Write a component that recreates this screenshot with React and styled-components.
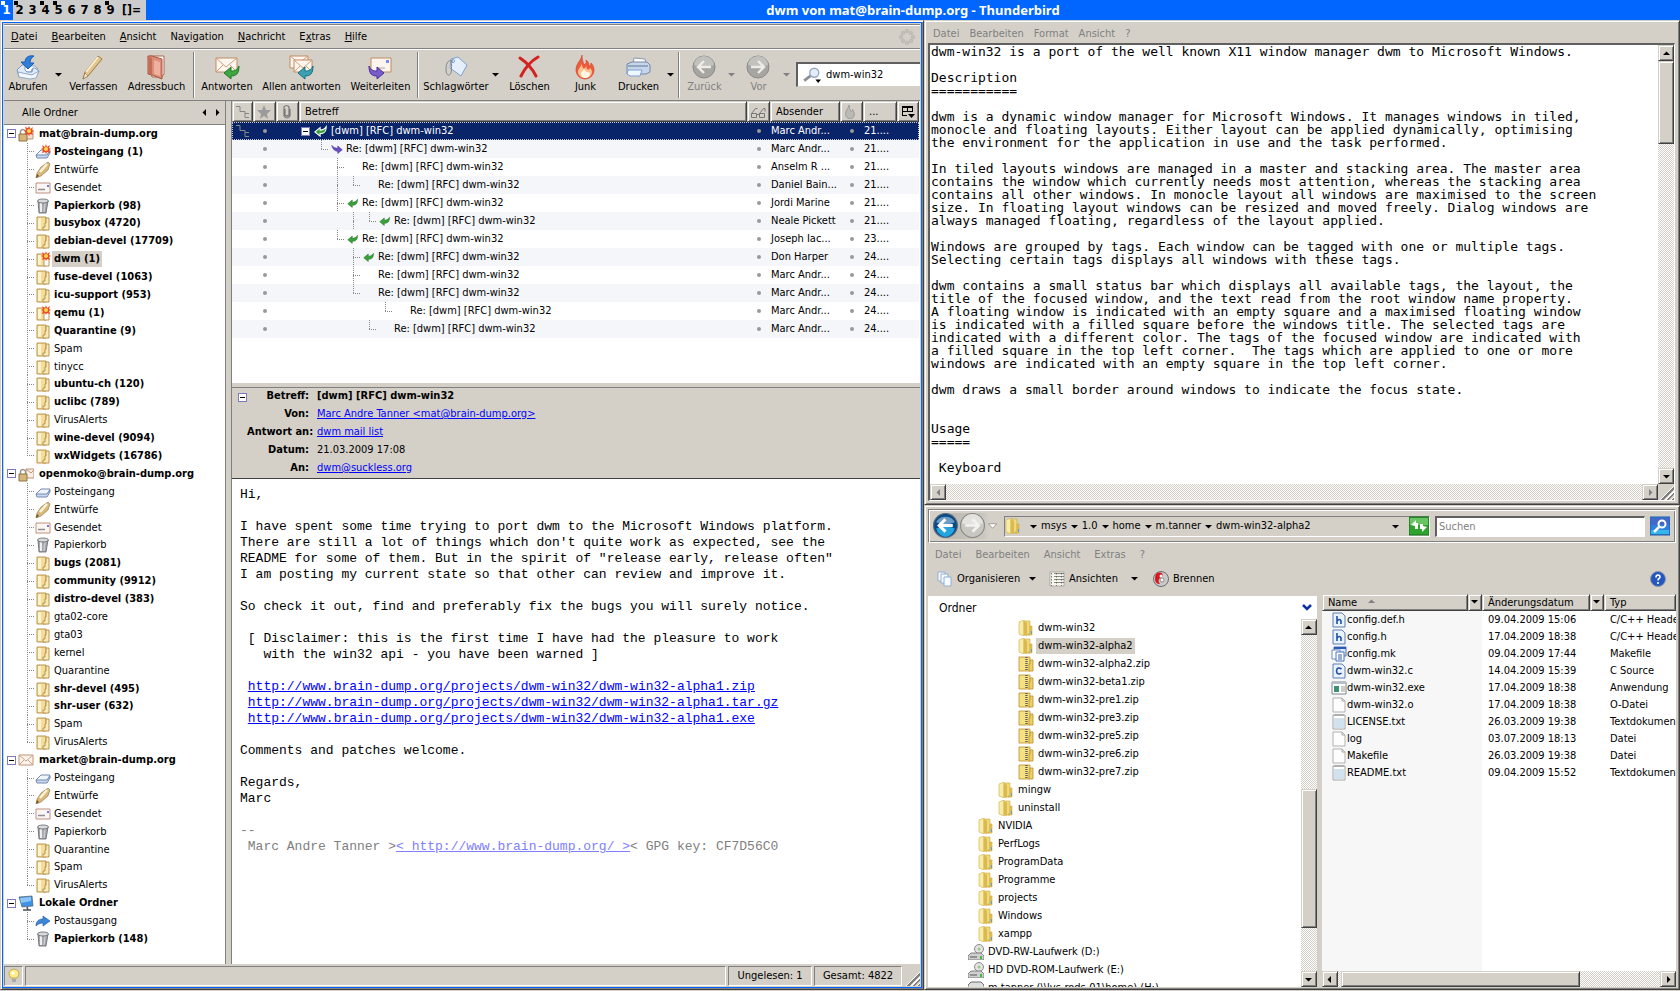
import React from 'react';
import styled, { createGlobalStyle, css } from 'styled-components';

// ICONS
const SHAPES = {
    inbox: <>
        <path d="M3 14h4l1 3h7l1-3h6l-3-3H7z" fill="#fff" stroke="#8ba7cf" />
        <path d="M1 15l5-5h3v5l2 2h5l1-4h2l4 3-3 6H3z" fill="#dfeaf8" stroke="#7f97bd" />
        <path d="M2 17l14 3 7-4-3 7-6 1-11-2z" fill="#f4f8fd" stroke="#93a9cb" />
        <path d="M18 1C12 0 9 3 9 7H5l7 7 6-6h-4c0-3 1-5 4-7z" fill="#2f7fd8" stroke="#1b5fb4" />
    </>,
    pencil: <>
        <path d="M17 1l4 3L7 21l-5 3 2-7z" fill="#e3c58f" stroke="#9c7a45" />
        <path d="M17 2L5 17" stroke="#fbeccb" strokeWidth="2" />
        <path d="M4 18l3 3-5 3z" fill="#f8ead2" stroke="#8a6c3d" strokeWidth=".6" />
    </>,
    book: <>
        <path d="M4 2l2-1h14v18l-2 3H8z" fill="#fff" stroke="#b1674f" />
        <path d="M4 1h4l10 3v20L8 20l-4-1z" fill="#dc8c77" stroke="#a75740" />
        <path d="M5 2l3 1v17l-3-1z" fill="#c36d56" />
        <path d="M10 5l6 2v14l-6-2z" fill="#eeb09f" />
    </>,
    reply: <>
        <path d="M1 3h21v14H1z" fill="#fcf6ee" stroke="#c08a63" />
        <path d="M1 3l10 9L22 3M1 17l7-7M22 17l-7-7" fill="none" stroke="#cf9e7b" />
        <path d="M9 18l7-6v4c4 0 6-1 8-5 0 8-3 10-8 10v3z" fill="#3ea63f" stroke="#1f7a29" />
    </>,
    replyAll: <>
        <path d="M1 1h18v12H1z" fill="#fcf6ee" stroke="#c08a63" />
        <path d="M1 1l9 7 9-7" fill="none" stroke="#cf9e7b" />
        <path d="M5 5h18v12H5z" fill="#fcf6ee" stroke="#c08a63" />
        <path d="M5 5l9 8 9-8M5 17l6-6M23 17l-6-6" fill="none" stroke="#cf9e7b" />
        <path d="M9 18l7-6v4c4 0 6-1 8-5 0 8-3 10-8 10v3z" fill="#3e9fb0" stroke="#17707f" />
    </>,
    forward: <>
        <path d="M3 3h20v14H3z" fill="#fcf6ee" stroke="#c08a63" />
        <path d="M18 5h3v3h-3z" fill="#7d86ea" />
        <path d="M9 13h8" stroke="#b5a69a" />
        <path d="M16 18l-7-6v4c-4 0-6-1-8-5 0 8 3 10 8 10v3z" fill="#7a5cc8" stroke="#4c2f9b" />
    </>,
    tag: <>
        <path d="M7 4l7-2 9 8-6 11L6 13z" fill="#e4effb" stroke="#7fa0cf" />
        <circle cx="9" cy="6" r="1.5" fill="#fff" stroke="#7fa0cf" />
        <path d="M9 6C3 4 2 10 2 15s3 7 5 3c1-4 0-9 1-12" fill="none" stroke="#808890" />
    </>,
    cross: <path d="M3 3c6 4 12 10 16 18M21 2C14 6 8 13 4 21" fill="none" stroke="#d3221f" strokeWidth="3" strokeLinecap="round" />,
    flame: <>
        <path d="M9 0c-1 6-6 8-6 15 0 5 4 9 9 9s9-4 9-9c0-3-1-5-3-7 0 2-1 3-2 3 0-3-1-5-3-6 1 3-1 4-2 5-1-3-2-6-2-10z" fill="#ee5a3a" stroke="#cd4027" strokeWidth=".6" />
        <path d="M9 8c0 3-4 5-4 9 0 3 3 6 7 6s7-3 7-6c0-2-1-3-2-4-1 2-2 2-3 1-1-1 0-2-1-3 0 2-2 3-3 2-1-2-1-3-1-5z" fill="#fcc391" />
        <path d="M11 14c0 2-3 2-3 5 0 2 2 4 4 4 3 0 5-2 5-4 0-1-1-2-2-2-1 1-3-1-4-3z" fill="#fff7e6" />
    </>,
    printer: <>
        <path d="M8 3l11 1 1 5H7z" fill="#fff" stroke="#8b97ad" />
        <path d="M1 9l5-2h15l3 3v7l-4 2H1z" fill="#c6d5ea" stroke="#7488a8" />
        <path d="M2 11h20" stroke="#5f7697" />
        <path d="M2 15h14l-2 6H4l-3-2z" fill="#eef6ff" stroke="#7fa0d0" />
    </>,
    back: <>
        <circle cx="12" cy="12" r="11" fill="#a5a5a2" stroke="#8a8a88" />
        <path d="M2 10a10 9 0 0 1 20 0q-10 3-20 0z" fill="#c1c1be" />
        <path d="M19 12H6M12 6l-6 6 6 6" fill="none" stroke="#eeece8" strokeWidth="2.4" />
    </>,
    next: <>
        <circle cx="12" cy="12" r="11" fill="#a5a5a2" stroke="#8a8a88" />
        <path d="M2 10a10 9 0 0 1 20 0q-10 3-20 0z" fill="#c1c1be" />
        <path d="M5 12h13M12 6l6 6-6 6" fill="none" stroke="#eeece8" strokeWidth="2.4" />
    </>,
    lens: <>
        <path d="M1 13l8-6" stroke="#8c8f96" strokeWidth="2.5" />
        <circle cx="10" cy="6" r="4" fill="#e3eefb" stroke="#9aa9bf" strokeWidth="1.2" />
        <path d="M11 12h5l-2.5 3z" fill="#000" />
    </>,
    throbber: <g fill="#c3c0ba" stroke="#a9a7a2" strokeWidth=".4">
        <circle cx="8" cy="2" r="1.8" /><circle cx="12" cy="4" r="1.8" /><circle cx="14" cy="8" r="1.8" /><circle cx="12" cy="12" r="1.8" />
        <circle cx="8" cy="14" r="1.8" /><circle cx="4" cy="12" r="1.8" /><circle cx="2" cy="8" r="1.8" /><circle cx="4" cy="4" r="1.8" />
    </g>,
    star: <path d="M8 1l2 5h5l-4 4 1 5-4-3-4 3 1-5-4-4h5z" fill="#9b9b9b" />,
    clip: <path d="M6 5v6q2 2 4 0V3q-2.5-3-5 0v9q3 4 6 0V5" fill="none" stroke="#777" strokeWidth="1.2" />,
    thread: <path d="M1 2.5h4v5h5v6h4M10 9.5h4" fill="none" stroke="#868686" />,
    glasses: <g fill="none" stroke="#777"><path d="M1.5 9.5h5v4h-5zM9.500 9.500h5v4h-5zM6.500 10.500h3M1.500 9.500l4-5h2M9.500 9.500l4-5h1.500v3" /></g>,
    junk: <path d="M7 0c-1 5-4 5-4 10 0 3 2 6 5 6s5-2 5-6c0-2-1-3-2-5 0 2-1 3-2 2-1-2-2-4-2-7z" fill="#b9b9b6" stroke="#8c8c8c" strokeWidth=".8" />,
    picker: <><path d="M2 2.5h11M2 3.5h11M2.5 3v9M12.5 3v5M7.5 3v5M2 7.5h11M2 11.5h5" fill="none" stroke="#000" /><path d="M8 10h7l-3.5 4z" fill="#000" /></>,
    lock: <>
        <path d="M8 3h8v9H8z" fill="#f8efe8" stroke="#c39277" />
        <path d="M8 3l5 4 3-3" fill="none" stroke="#c39277" />
        <path d="M2.5 8V5q2-3 5 0v3" fill="none" stroke="#9a958b" strokeWidth="1.4" />
        <path d="M1 8h8v7H1z" fill="#d5b77c" stroke="#8e7543" />
    </>,
    lockNew: <>
        <path d="M8 4h7v9H8z" fill="#f3dcd0" stroke="#c39277" />
        <path d="M2.5 8V5q2-3 5 0v3" fill="none" stroke="#9a958b" strokeWidth="1.4" />
        <path d="M1 8h8v7H1z" fill="#d5b77c" stroke="#8e7543" />
        <path d="M11 0l1.5 3L15 1l-1 3 2 1-2 1 1 3-3-1-1 2-1-2-3 1 1-3-2-1 2-1-1-3 3 1z" fill="#f04a23" />
        <circle cx="11" cy="5" r="2" fill="#ffd84a" />
    </>,
    mail: <><path d="M1 3h14v10H1z" fill="#fbf5ee" stroke="#c39277" /><path d="M1 3l7 6 7-6M1 13l5-5M15 13l-5-5" fill="none" stroke="#cfa184" /></>,
    tray: <>
        <path d="M1 10l5-5h9l-3 6H2z" fill="#f0f5fc" stroke="#7489ad" />
        <path d="M1 10h11l3-4v2l-3 5H2z" fill="#c9d9ee" stroke="#7489ad" />
    </>,
    trayNew: <>
        <path d="M1 11l5-5h9l-3 6H2z" fill="#f0f5fc" stroke="#7489ad" />
        <path d="M1 11h11l3-4v2l-3 5H2z" fill="#c9d9ee" stroke="#7489ad" />
        <path d="M11 0l1 3 3-2-1 3 2 1-2 1 1 3-3-1-1 2-1-2-3 1 1-3-2-1 2-1-1-3 3 2z" fill="#f04a23" />
        <circle cx="11" cy="5" r="2" fill="#ffd84a" />
    </>,
    draft: <>
        <path d="M13 0l2 2-2 6-7 6-5 2 1-5 4-6z" fill="#d9b878" stroke="#8b7146" strokeWidth=".6" />
        <path d="M12 2L5 10" stroke="#fbf1d6" strokeWidth="2.5" />
        <path d="M2 12l2 2-3 2z" fill="#6b5430" />
    </>,
    sent: <><path d="M1 3h14v10H1z" fill="#fbf6f2" stroke="#c09080" /><path d="M12 5h2v2h-2z" fill="#6f78e6" /><path d="M3 9.5h7" stroke="#8e8e98" strokeWidth="1.5" /></>,
    trash: <>
        <path d="M3 3l1 12h7l2-12z" fill="#a3a6aa" stroke="#5e6166" strokeWidth=".8" />
        <path d="M6 4v10" stroke="#efefef" strokeWidth="2" />
        <path d="M10 4l-1 10" stroke="#c9cbce" strokeWidth="1.4" />
        <ellipse cx="8" cy="3" rx="5.5" ry="2" fill="#d9dadb" stroke="#5e6166" strokeWidth=".8" />
    </>,
    box: <>
        <path d="M2 2h9v13H2z" fill="#f3dc9c" stroke="#b48a42" strokeWidth=".9" />
        <path d="M3 3h3v11H3z" fill="#fdf3cf" />
        <path d="M11 3h3v12H8v-3h2V8h1z" fill="#faeab8" stroke="#b48a42" strokeWidth=".9" />
    </>,
    boxNew: <>
        <path d="M2 3h9v12H2z" fill="#f3dc9c" stroke="#b48a42" strokeWidth=".9" />
        <path d="M3 4h3v10H3z" fill="#fdf3cf" />
        <path d="M9 7h5v8H9z" fill="#fff" stroke="#b48a42" strokeWidth=".9" />
        <path d="M11 0l1 3 3-2-1 3 2 1-2 1 1 3-3-1-1 2-1-2-3 1 1-3-2-1 2-1-1-3 3 2z" fill="#f04a23" />
        <circle cx="11" cy="5" r="2" fill="#ffd84a" />
    </>,
    monitor: <>
        <path d="M1 2l13-1 1 10-11 1z" fill="#3f93e4" stroke="#555d68" strokeWidth=".7" />
        <path d="M2 3l11-1v4L3 8z" fill="#8cc6f7" />
        <path d="M9 12l1 3M5 15h8" stroke="#4a4f57" strokeWidth="1.5" />
    </>,
    outbox: <path d="M1 13c0-5 3-7 7-7V3l7 5-7 5v-3c-3 0-5 1-7 3z" fill="#3c86d6" stroke="#2761a5" strokeWidth=".7" />,
    bulb: <><path d="M5 10Q1 5 5 2q3-2 6 0 4 3 0 8z" fill="#ffec8b" stroke="#b89b3c" strokeWidth=".8" /><path d="M6 11h4v3H6z" fill="#a9a9a9" /><circle cx="7" cy="5" r="1.5" fill="#fff" /></>,
    greenArrow: <path d="M1 9l6-5v3c3 0 5-1 7-4 0 6-2 8-7 8v3z" fill="#3aa13a" stroke="#1e6f24" strokeWidth=".7" />,
    greenArrowLit: <path d="M1 9l6-5v3c3 0 5-1 7-4 0 6-2 8-7 8v3z" fill="#3aa13a" stroke="#fff" strokeWidth="1.2" />,
    purpleArrow: <path d="M15 9l-6 5v-3C5 11 2 8 1 3c2 3 5 4 8 4V4z" fill="#6a4fc2" stroke="#44309a" strokeWidth=".7" />,
    folder: <>
        <path d="M1 2l5-2v16l-5-2z" fill="#f9eda6" stroke="#cfae4a" strokeWidth=".6" />
        <path d="M6 1h6v14H6z" fill="#f1d878" stroke="#c9a945" strokeWidth=".6" />
        <path d="M6 1l3 2v13l-3-1z" fill="#dcb850" />
        <path d="M12 6h2v9h-4v-1h2z" fill="#e5c45a" stroke="#c9a945" strokeWidth=".6" />
        <path d="M13 11h1v3h-1z" fill="#4fa3e8" />
    </>,
    zip: <>
        <path d="M1 1h11v14H1z" fill="#f6e182" stroke="#b98f2c" strokeWidth=".8" />
        <path d="M12 4h3v11h-4V8h1z" fill="#edcf62" stroke="#b98f2c" strokeWidth=".8" />
        <path d="M8.5 1v13" stroke="#66625a" strokeWidth="2.5" strokeDasharray="1 1" />
    </>,
    drive: <>
        <circle cx="11" cy="5" r="4.5" fill="#e3e3e3" stroke="#8b8b8b" /><circle cx="11" cy="5" r="1.5" fill="#9ac98a" />
        <path d="M0 12l3-3h10l3 3v4H0z" fill="#cfcfcf" stroke="#6a6a6a" strokeWidth=".8" />
        <path d="M2 13h7" stroke="#555" /><path d="M12 12h2v3h-2z" fill="#38c238" />
    </>,
    disk: <><path d="M0 5l3-3h10l3 3v10H0z" fill="#dedede" stroke="#6a6a6a" /><path d="M2 8h12" stroke="#888" /></>,
    fileH: <><path d="M2 1h9l3 3v11H2z" fill="#eaf2fc" stroke="#5d7fb3" /><path d="M6 4v8M6 9q3-3 4 0v3" fill="none" stroke="#1c4fa8" strokeWidth="1.6" /></>,
    fileC: <><path d="M2 1h9l3 3v11H2z" fill="#eaf2fc" stroke="#5d7fb3" /><path d="M10.5 6q-3-2-4.5 0-1 2 0 4 2 2 4.5 0" fill="none" stroke="#1c4fa8" strokeWidth="1.6" /></>,
    fileMk: <><path d="M3 1h12v9H3z" fill="#dbe7f8" stroke="#4873bb" /><path d="M3 2h12" stroke="#2a5cb4" strokeWidth="2" /><path d="M1 4h8v9H1z" fill="#fff" stroke="#6c8bc0" /><path d="M5 6h8v9H5z" fill="#fff" stroke="#4873bb" /><path d="M7 9h4M7 11h4M7 13h4" stroke="#2a5cb4" /></>,
    fileExe: <><path d="M1 2h14v12H1z" fill="#fff" stroke="#7d8691" /><path d="M1 3h14" stroke="#b5bec9" strokeWidth="2" /><path d="M3 6h5v6H3z" fill="#3f8f73" /><path d="M10 7h4M10 9h4M10 11h4" stroke="#999" /></>,
    file: <><path d="M2 1h9l3 3v11H2z" fill="#fdfdfd" stroke="#a8a8a8" strokeWidth=".9" /><path d="M11 1v3h3" fill="none" stroke="#a8a8a8" /></>,
    fileTxt: <><path d="M2 1h12v14H2z" fill="#fff" stroke="#9a9a9a" strokeWidth=".9" /><path d="M3 5h10M3 7h10M3 9h10M3 11h10M3 13h10" stroke="#a3c4dc" /><path d="M4 0v2M6 0v2M8 0v2M10 0v2M12 0v2" stroke="#777" strokeWidth=".7" /></>,
    navBack: <>
        <circle cx="12" cy="12" r="11.5" fill="#0b4a86" stroke="#5d6e80" />
        <path d="M3 15q9-4 18 0-2 7-9 8-7-1-9-8z" fill="#25a5e0" />
        <path d="M3 9a9.5 8 0 0 1 18 0q-9 4-18 0z" fill="#6c9cc4" />
        <path d="M19 12H6M12 6l-6 6 6 6" fill="none" stroke="#fff" strokeWidth="3" />
    </>,
    navNext: <>
        <circle cx="12" cy="12" r="11.5" fill="#c9c7c2" stroke="#86857f" />
        <path d="M2 10a10 9 0 0 1 20 0q-10 3-20 0z" fill="#e4e2de" />
        <path d="M5 12h13M12 6l6 6-6 6" fill="none" stroke="#f3f2f0" strokeWidth="2.5" />
    </>,
    navMore: <path d="M2 5h11l-5.5 6z" fill="#fff" stroke="#86857f" />,
    refresh: <><path d="M0 0h20v18H0z" fill="#2ea32e" stroke="#1d6f22" /><path d="M1 1h18v7H1z" fill="#69c463" /><path d="M2 8l5-5v3h2v6H6V9zM18 10l-5 5v-3h-2V7h3v2z" fill="#fff" /></>,
    find: <><path d="M0 0h20v18H0z" fill="#2f7fdc" stroke="#225aa6" /><path d="M1 1h18v7H1z" fill="#4468c9" /><path d="M1 13h18v4H1z" fill="#35b6ea" /><circle cx="12" cy="7" r="3.5" fill="none" stroke="#fff" strokeWidth="2" /><path d="M9 10l-5 5" stroke="#fff" strokeWidth="2.5" /></>,
    pages: <g fill="#f7fbff" stroke="#8fb0d4"><path d="M1 1h7v9H1z" /><path d="M4 3h7v9H4z" /><path d="M7 6h7v9H7z" /></g>,
    views: <><path d="M1 1h14v14H1z" fill="#f6f4ef" stroke="#9a9890" strokeWidth=".7" /><path d="M2.5 2v13M7.5 2v13M12.5 2v13" stroke="#78766f" strokeDasharray="1.5 1.5" /><path d="M5 2.5h10M5 5.5h10M5 8.5h10M5 11.5h10" stroke="#5d5b55" strokeWidth=".7" /></>,
    disc: <><circle cx="8" cy="8" r="7.5" fill="#c9c9c9" stroke="#6d6d6d" /><path d="M9 2q-7-2-7 6 0 5 5 5-3-4 0-6 4-1 2-5z" fill="#d8151b" /><circle cx="8" cy="5" r="1.5" fill="#fff" /><circle cx="9" cy="9" r="2" fill="#fff" stroke="#888" /></>,
    help: <><circle cx="8" cy="8" r="7.5" fill="#2456c0" stroke="#8b93a3" /><path d="M6 6.5q0-2.5 2-2.5t2 2q0 1-1 1.5t-1 2M8 11v2" fill="none" stroke="#fff" strokeWidth="1.6" /></>,
    chevron: <path d="M4 5l4 4 4-4" fill="none" stroke="#0d33a0" strokeWidth="2.5" />,
    blank: null,
};

const BIG = ['inbox', 'pencil', 'book', 'reply', 'replyAll', 'forward', 'tag', 'cross', 'flame', 'printer', 'back', 'next', 'navBack', 'navNext'];

const Icon = ({ name, size = 16 }) => {
    const box = BIG.includes(name) ? '0 0 25 25' : name === 'refresh' || name === 'find' ? '0 -1 20 20' : '0 0 16 16';
    return <Drawing viewBox={box} width={size} height={size} aria-hidden="true">{SHAPES[name]}</Drawing>;
};

const Arrow = ({ dir = 'down', dim }) => {
    const d = { down: 'M1 3h7L4.5 6.5z', up: 'M1 6h7L4.5 2.5z', left: 'M6 1v7L2.5 4.5z', right: 'M3 1v7l3.5-3.5z' }[dir];
    return <Drawing viewBox="0 0 9 9" width={9} height={9} aria-hidden="true"><path d={d} fill={dim ? '#808080' : '#000'} /></Drawing>;
};

// DATA
const TAGS = [['1', true], ['2', true], ['3'], ['4', true], ['5', true], ['6'], ['7'], ['8'], ['9', true]];

const MENU = [['', 'D', 'atei'], ['', 'B', 'earbeiten'], ['', 'A', 'nsicht'], ['Na', 'v', 'igation'], ['', 'N', 'achricht'], ['E', 'x', 'tras'], ['', 'H', 'ilfe']];

const TOOLS = [
    { icon: 'inbox', label: 'Abrufen', w: 48, menu: 12 },
    { icon: 'pencil', label: 'Verfassen', w: 59 },
    { icon: 'book', label: 'Adressbuch', w: 67 },
    null,
    { icon: 'reply', label: 'Antworten', w: 58 },
    { icon: 'replyAll', label: 'Allen antworten', w: 91 },
    { icon: 'forward', label: 'Weiterleiten', w: 67 },
    null,
    { icon: 'tag', label: 'Schlagwörter', w: 68, menu: 10 },
    { icon: 'cross', label: 'Löschen', w: 59 },
    { icon: 'flame', label: 'Junk', w: 53 },
    { icon: 'printer', label: 'Drucken', w: 53, menu: 10 },
    null,
    { icon: 'back', label: 'Zurück', w: 43, menu: 10, off: true },
    { icon: 'next', label: 'Vor', w: 45, menu: 10, off: true },
];

const ACCOUNTS = [
    { icon: 'lockNew', name: 'mat@brain-dump.org', folders: [
        ['trayNew', 'Posteingang (1)'], ['draft', 'Entwürfe'], ['sent', 'Gesendet'], ['trash', 'Papierkorb (98)'],
        ['box', 'busybox (4720)'], ['box', 'debian-devel (17709)'], ['boxNew', 'dwm (1)', true], ['box', 'fuse-devel (1063)'],
        ['box', 'icu-support (953)'], ['boxNew', 'qemu (1)'], ['box', 'Quarantine (9)'], ['box', 'Spam'], ['box', 'tinycc'],
        ['box', 'ubuntu-ch (120)'], ['box', 'uclibc (789)'], ['box', 'VirusAlerts'], ['box', 'wine-devel (9094)'], ['box', 'wxWidgets (16786)'],
    ] },
    { icon: 'lock', name: 'openmoko@brain-dump.org', folders: [
        ['tray', 'Posteingang'], ['draft', 'Entwürfe'], ['sent', 'Gesendet'], ['trash', 'Papierkorb'], ['box', 'bugs (2081)'],
        ['box', 'community (9912)'], ['box', 'distro-devel (383)'], ['box', 'gta02-core'], ['box', 'gta03'], ['box', 'kernel'],
        ['box', 'Quarantine'], ['box', 'shr-devel (495)'], ['box', 'shr-user (632)'], ['box', 'Spam'], ['box', 'VirusAlerts'],
    ] },
    { icon: 'mail', name: 'market@brain-dump.org', folders: [
        ['tray', 'Posteingang'], ['draft', 'Entwürfe'], ['sent', 'Gesendet'], ['trash', 'Papierkorb'],
        ['box', 'Quarantine'], ['box', 'Spam'], ['box', 'VirusAlerts'],
    ] },
    { icon: 'monitor', name: 'Lokale Ordner', folders: [['outbox', 'Postausgang'], ['trash', 'Papierkorb (148)']] },
];

// slots: one character per tree level before the row's own branch, '|' draws the line through
const THREAD = [
    { slots: '', end: true, icon: 'purpleArrow', from: 'Marc Andr...', date: '21....' },
    { slots: ' ', from: 'Anselm R ...', date: '21....' },
    { slots: ' |', end: true, from: 'Daniel Bain...', date: '21....' },
    { slots: ' ', icon: 'greenArrow', from: 'Jordi Marine', date: '21....' },
    { slots: '  |', end: true, icon: 'greenArrow', from: 'Neale Pickett', date: '21....' },
    { slots: ' ', end: true, icon: 'greenArrow', from: 'Joseph Iac...', date: '23....' },
    { slots: '  ', icon: 'greenArrow', from: 'Don Harper', date: '24....' },
    { slots: '  ', from: 'Marc Andr...', date: '24....' },
    { slots: '  ', end: true, from: 'Marc Andr...', date: '24....' },
    { slots: '    ', end: true, from: 'Marc Andr...', date: '24....' },
    { slots: '   ', end: true, from: 'Marc Andr...', date: '24....' },
];

const README = `dwm-win32 is a port of the well known X11 window manager dwm to Microsoft Windows.

Description
===========

dwm is a dynamic window manager for Microsoft Windows. It manages windows in tiled,
monocle and floating layouts. Either layout can be applied dynamically, optimising
the environment for the application in use and the task performed.

In tiled layouts windows are managed in a master and stacking area. The master area
contains the window which currently needs most attention, whereas the stacking area
contains all other windows. In monocle layout all windows are maximised to the screen
size. In floating layout windows can be resized and moved freely. Dialog windows are
always managed floating, regardless of the layout applied.

Windows are grouped by tags. Each window can be tagged with one or multiple tags.
Selecting certain tags displays all windows with these tags.

dwm contains a small status bar which displays all available tags, the layout, the
title of the focused window, and the text read from the root window name property.
A floating window is indicated with an empty square and a maximised floating window
is indicated with a filled square before the windows title. The selected tags are
indicated with a different color. The tags of the focused window are indicated with
a filled square in the top left corner.  The tags which are applied to one or more
windows are indicated with an empty square in the top left corner.

dwm draws a small border around windows to indicate the focus state.


Usage
=====

 Keyboard`;

const PLACES = [
    [3, 'folder', 'dwm-win32'], [3, 'folder', 'dwm-win32-alpha2', true], [3, 'zip', 'dwm-win32-alpha2.zip'],
    [3, 'zip', 'dwm-win32-beta1.zip'], [3, 'zip', 'dwm-win32-pre1.zip'], [3, 'zip', 'dwm-win32-pre3.zip'],
    [3, 'zip', 'dwm-win32-pre5.zip'], [3, 'zip', 'dwm-win32-pre6.zip'], [3, 'zip', 'dwm-win32-pre7.zip'],
    [2, 'folder', 'mingw'], [2, 'folder', 'uninstall'],
    [1, 'folder', 'NVIDIA'], [1, 'folder', 'PerfLogs'], [1, 'folder', 'ProgramData'], [1, 'folder', 'Programme'],
    [1, 'folder', 'projects'], [1, 'folder', 'Windows'], [1, 'folder', 'xampp'],
    [0, 'drive', 'DVD-RW-Laufwerk (D:)'], [0, 'drive', 'HD DVD-ROM-Laufwerk (E:)'], [0, 'disk', 'm.tanner (\\\\lvs-rods-01\\home) (H:)'],
];

const FILES = [
    ['fileH', 'config.def.h', '09.04.2009 15:06', 'C/C++ Header'],
    ['fileH', 'config.h', '17.04.2009 18:38', 'C/C++ Header'],
    ['fileMk', 'config.mk', '09.04.2009 17:44', 'Makefile'],
    ['fileC', 'dwm-win32.c', '14.04.2009 15:39', 'C Source'],
    ['fileExe', 'dwm-win32.exe', '17.04.2009 18:38', 'Anwendung'],
    ['file', 'dwm-win32.o', '17.04.2009 18:38', 'O-Datei'],
    ['fileTxt', 'LICENSE.txt', '26.03.2009 19:38', 'Textdokument'],
    ['file', 'log', '03.07.2009 18:13', 'Datei'],
    ['file', 'Makefile', '26.03.2009 19:38', 'Datei'],
    ['fileTxt', 'README.txt', '09.04.2009 15:52', 'Textdokument'],
];

// WINDOWS
const TagBar = () => (
    <Bar>
        <Tags>
            {TAGS.map(([tag, used], i) => <Tag key={tag} $on={i === 0} $used={used}>{tag}</Tag>)}
            <LayoutButton>[]=</LayoutButton>
        </Tags>
        <BarTitle>dwm von mat@brain-dump.org - Thunderbird</BarTitle>
    </Bar>
);

const Scrollbar = ({ across, before, thumb, off }) => (
    <Track $across={across}>
        <TrackButton aria-label="zurück"><Arrow dir={across ? 'left' : 'up'} dim={off} /></TrackButton>
        {thumb ? <><Space $grow={before} /><Thumb $grow={thumb} /><Space $grow={100 - before - thumb} /></> : <Space $grow={100} />}
        <TrackButton aria-label="vor"><Arrow dir={across ? 'right' : 'down'} dim={off} /></TrackButton>
    </Track>
);

const FolderTree = () => (
    <Tree>
        {ACCOUNTS.map(account => (
            <React.Fragment key={account.name}>
                <TreeRow $bold>
                    <Expander aria-label="zuklappen" />
                    <Icon name={account.icon} />
                    <TreeLabel>{account.name}</TreeLabel>
                </TreeRow>
                {account.folders.map(([icon, name, on], i) => (
                    <TreeRow key={name} $child $bold={name.includes('(')}>
                        <Branch $end={i === account.folders.length - 1} />
                        <Icon name={icon} />
                        <TreeLabel $on={on}>{name}</TreeLabel>
                    </TreeRow>
                ))}
            </React.Fragment>
        ))}
    </Tree>
);

const MessageList = () => (
    <Messages>
        <thead>
            <tr>
                <HeadCell $w={21}><Icon name="thread" /></HeadCell>
                <HeadCell $w={23}><Icon name="star" /></HeadCell>
                <HeadCell $w={23}><Icon name="clip" /></HeadCell>
                <HeadCell $text>Betreff</HeadCell>
                <HeadCell $w={23}><Icon name="glasses" /></HeadCell>
                <HeadCell $w={70} $text>Absender</HeadCell>
                <HeadCell $w={23}><Icon name="junk" size={14} /></HeadCell>
                <HeadCell $w={34} $text>...</HeadCell>
                <HeadCell $w={22}><Icon name="picker" /></HeadCell>
            </tr>
        </thead>
        <tbody>
            <MessageRow $on>
                <td><Icon name="thread" /></td>
                <td><Dot /></td>
                <td />
                <td><Subject $root><Expander aria-label="zuklappen" /><Icon name="greenArrowLit" size={14} />[dwm] [RFC] dwm-win32</Subject></td>
                <td><Dot /></td>
                <td>Marc Andr...</td>
                <td><Dot /></td>
                <td colSpan="2">21....</td>
            </MessageRow>
            {THREAD.map((row, i) => (
                <MessageRow key={i}>
                    <td />
                    <td><Dot /></td>
                    <td />
                    <td>
                        <Subject>
                            {row.slots.split('').map((s, j) => <Slot key={j}>{s === '|' && <Branch $through />}</Slot>)}
                            <Branch $end={row.end} />
                            <Icon name={row.icon || 'blank'} size={12} />
                            Re: [dwm] [RFC] dwm-win32
                        </Subject>
                    </td>
                    <td><Dot /></td>
                    <td>{row.from}</td>
                    <td><Dot /></td>
                    <td colSpan="2">{row.date}</td>
                </MessageRow>
            ))}
        </tbody>
    </Messages>
);

const Mail = () => (
    <Window $focus>
        <Client>
            <MenuBar>
                {MENU.map(([a, key, b]) => <MenuItem key={key + b}>{a}<u>{key}</u>{b}</MenuItem>)}
                <Filler />
                <Icon name="throbber" />
            </MenuBar>
            <ToolBar>
                {TOOLS.map((tool, i) => tool ? (
                    <React.Fragment key={tool.label}>
                        <Tool $w={tool.w} disabled={tool.off}><Icon name={tool.icon} size={25} />{tool.label}</Tool>
                        {tool.menu && <ToolMenu $w={tool.menu} disabled={tool.off} aria-label={tool.label + ' Menü'}><Arrow dim={tool.off} /></ToolMenu>}
                    </React.Fragment>
                ) : <Divider key={i} />)}
                <QuickSearch>
                    <Icon name="lens" size={18} />
                    <input aria-label="Suche" defaultValue="dwm-win32" />
                </QuickSearch>
            </ToolBar>
            <Panes>
                <Folders>
                    <FoldersHead>Alle Ordner<Filler /><Arrow dir="left" /><Arrow dir="right" /></FoldersHead>
                    <FolderTree />
                </Folders>
                <Reader>
                    <ListPane><MessageList /></ListPane>
                    <Envelope>
                        <Expander aria-label="zuklappen" />
                        <Fields>
                            <dt>Betreff:</dt><dd><b>[dwm] [RFC] dwm-win32</b></dd>
                            <dt>Von:</dt><dd><a href="#von">Marc Andre Tanner &lt;mat@brain-dump.org&gt;</a></dd>
                            <dt>Antwort an:</dt><dd><a href="#liste">dwm mail list</a></dd>
                            <dt>Datum:</dt><dd>21.03.2009 17:08</dd>
                            <dt>An:</dt><dd><a href="#an">dwm@suckless.org</a></dd>
                        </Fields>
                    </Envelope>
                    <Body>
                        {`Hi,

I have spent some time trying to port dwm to the Microsoft Windows platform.
There are still a lot of things which don't quite work as expected, see the
README for some of them. But in the spirit of "release early, release often"
I am posting my current state so that other can review and improve it.

So check it out, find and preferably fix the bugs you will surely notice.

 [ Disclaimer: this is the first time I have had the pleasure to work
   with the win32 api - you have been warned ]

 `}
                        <a href="#zip">http://www.brain-dump.org/projects/dwm-win32/dwm-win32-alpha1.zip</a>{'\n '}
                        <a href="#tar">http://www.brain-dump.org/projects/dwm-win32/dwm-win32-alpha1.tar.gz</a>{'\n '}
                        <a href="#exe">http://www.brain-dump.org/projects/dwm-win32/dwm-win32-alpha1.exe</a>
                        {`

Comments and patches welcome.

Regards,
Marc

`}
                        <Signature>{'--\n Marc Andre Tanner >'}<a href="#home">{'< http://www.brain-dump.org/ >'}</a>{'< GPG key: CF7D56C0'}</Signature>
                    </Body>
                </Reader>
            </Panes>
            <StatusBar>
                <StatusCell $w={19}><Icon name="bulb" /></StatusCell>
                <StatusCell $grow />
                <StatusCell $w={84}>Ungelesen: 1</StatusCell>
                <StatusCell $w={88}>Gesamt: 4822</StatusCell>
                <Grip />
            </StatusBar>
        </Client>
    </Window>
);

const Editor = () => (
    <Window>
        <EditorMenu>
            {['Datei', 'Bearbeiten', 'Format', 'Ansicht', '?'].map(m => <MenuItem key={m} disabled $tight>{m}</MenuItem>)}
        </EditorMenu>
        <EditorFrame>
            <Text aria-label="README" spellCheck={false} defaultValue={README} />
            <Scrollbar before={0} thumb={20} />
            <Scrollbar across off />
            <Grip />
        </EditorFrame>
    </Window>
);

const Explorer = () => (
    <Window>
        <ExplorerClient>
            <AddressRow>
                <NavButtons>
                    <button aria-label="Zurück"><Icon name="navBack" size={26} /></button>
                    <button aria-label="Vor"><Icon name="navNext" size={26} /></button>
                    <button aria-label="Verlauf"><Icon name="navMore" size={12} /></button>
                </NavButtons>
                <Address>
                    <Icon name="folder" />
                    {['msys', '1.0', 'home', 'm.tanner', 'dwm-win32-alpha2'].map(p => <Crumb key={p}><Arrow />{p}</Crumb>)}
                    <Filler />
                    <Arrow />
                    <button aria-label="Aktualisieren"><Icon name="refresh" size={20} /></button>
                </Address>
                <Search placeholder="Suchen" aria-label="Suchen" />
                <button aria-label="Suche starten"><Icon name="find" size={20} /></button>
            </AddressRow>
            <ExplorerMenu>
                {['Datei', 'Bearbeiten', 'Ansicht', 'Extras', '?'].map(m => <MenuItem key={m} disabled>{m}</MenuItem>)}
            </ExplorerMenu>
            <Commands>
                <Command $w={112}><Icon name="pages" />Organisieren<Filler /><Arrow /></Command>
                <Command $w={104}><Icon name="views" />Ansichten<Filler /><Arrow /></Command>
                <Command><Icon name="disc" />Brennen</Command>
                <Filler />
                <button aria-label="Hilfe"><Icon name="help" /></button>
            </Commands>
            <Columns>
                <Places>
                    <PlacesHead>Ordner<Filler /><Icon name="chevron" /></PlacesHead>
                    <PlacesBody>
                        <PlacesList>
                            {PLACES.map(([level, icon, name, on]) => (
                                <Place key={name} $level={level}><Icon name={icon} /><TreeLabel $on={on}>{name}</TreeLabel></Place>
                            ))}
                        </PlacesList>
                        <Scrollbar before={46} thumb={41} />
                    </PlacesBody>
                </Places>
                <FilePane>
                    <FileScroll>
                        <Files>
                            <thead>
                                <tr>
                                    <FileHead $w={146}>Name &nbsp;&nbsp;<Arrow dir="up" dim /></FileHead>
                                    <FileHead $w={14} $slim><Arrow /></FileHead>
                                    <FileHead $w={108}>Änderungsdatum</FileHead>
                                    <FileHead $w={14} $slim><Arrow /></FileHead>
                                    <FileHead>Typ</FileHead>
                                </tr>
                            </thead>
                            <tbody>
                                {FILES.map(([icon, name, date, type]) => (
                                    <tr key={name}>
                                        <td colSpan="2"><FileName><Icon name={icon} />{name}</FileName></td>
                                        <td colSpan="2">{date}</td>
                                        <td>{type}</td>
                                    </tr>
                                ))}
                            </tbody>
                        </Files>
                    </FileScroll>
                    <Scrollbar across before={1} thumb={74} />
                </FilePane>
            </Columns>
        </ExplorerClient>
    </Window>
);

const App = () => (
    <Desktop>
        <Global />
        <TagBar />
        <Tiles>
            <Mail />
            <Stack>
                <Editor />
                <Explorer />
            </Stack>
        </Tiles>
    </Desktop>
);

// STYLES
const FACE = '#d4d0c8';
const UI = '"DejaVu Sans Condensed", "DejaVu Sans", sans-serif';

const raised = css`
  border: 1px solid;
  border-color: ${FACE} #404040 #404040 ${FACE};
  box-shadow: inset 1px 1px #fff, inset -1px -1px #808080;
`;

const sunken = css`
  border: 1px solid;
  border-color: #808080 #fff #fff #808080;
`;

const Global = createGlobalStyle`
  * { box-sizing: border-box; }
  body { margin: 0; background: ${FACE}; font: 11px/14px ${UI}; color: #000; }
  button, input, textarea { font: inherit; color: inherit; margin: 0; padding: 0; border: 0; border-radius: 0; background: none; outline: 0; }
  button { display: flex; flex: none; align-items: center; justify-content: center; white-space: nowrap; }
  ul, dl, dd, pre { margin: 0; padding: 0; list-style: none; }
  a { color: #0000ff; }
  table { border-collapse: separate; border-spacing: 0; }
  th, td { padding: 0; font-weight: normal; text-align: left; }
`;

const Drawing = styled.svg`
  display: block;
  flex: none;
`;

const Filler = styled.span`
  flex: 1;
`;

const Desktop = styled.div`
  display: flex;
  flex-direction: column;
  height: 100vh;
  padding-bottom: 1px;
  overflow: hidden;
`;

const Bar = styled.header`
  display: flex;
  flex: none;
  height: 20px;
  background: #0066ff;
  color: #fff;
`;

const Tags = styled.div`
  display: flex;
  width: 146px;
  background: #cccccc;
  color: #000;
`;

const Tag = styled.button`
  width: 13px;
  height: 20px;
  font-size: 13px;
  font-weight: bold;
  ${p => p.$on && css`background-color: #0066ff; color: #fff;`}
  ${p => p.$used && css`
    background-image: linear-gradient(${p.$on ? '#fff, #fff' : '#000, #000'});
    background-size: 4px 4px;
    background-position: 1px 1px;
    background-repeat: no-repeat;
  `}
`;

const LayoutButton = styled.button`
  flex: 1;
  font-size: 12px;
  font-weight: bold;
`;

const BarTitle = styled.h1`
  flex: 1;
  margin: 0;
  font: bold 13px/20px "Noto Sans", sans-serif;
  text-align: center;
`;

const Tiles = styled.main`
  display: grid;
  grid-template-columns: 11fr 9fr;
  flex: 1;
  min-height: 0;
`;

const Stack = styled.div`
  display: grid;
  grid-template-rows: 1fr 1fr;
  min-width: 0;
  min-height: 0;
`;

const Window = styled.section`
  display: flex;
  flex-direction: column;
  min-width: 0;
  min-height: 0;
  padding: ${p => p.$focus ? '1px' : '2px'};
  background: ${FACE};
  ${raised}
`;

const Client = styled.div`
  display: flex;
  flex-direction: column;
  flex: 1;
  min-height: 0;
  padding: 1px;
  border: 1px solid #0066ff;
`;

const MenuBar = styled.nav`
  display: flex;
  align-items: center;
  height: 25px;
  padding-right: 5px;
  border-top: 1px solid #808080;
  border-bottom: 1px solid #808080;
  box-shadow: inset 0 1px #fff;
`;

const MenuItem = styled.button`
  padding: 0 ${p => p.$tight ? 5 : 7}px;
  &:disabled { color: #808080; }
`;

const ToolBar = styled.div`
  display: flex;
  align-items: center;
  height: 52px;
  border-bottom: 1px solid #808080;
  box-shadow: inset 0 1px #fff;
`;

const Tool = styled.button`
  flex-direction: column;
  width: ${p => p.$w}px;
  &:disabled { color: #808080; }
`;

const ToolMenu = styled.button`
  width: ${p => p.$w}px;
  height: 24px;
`;

const Divider = styled.span`
  flex: none;
  width: 2px;
  height: 46px;
  margin: 0 3px;
  border-left: 1px solid #808080;
  border-right: 1px solid #fff;
`;

const QuickSearch = styled.label`
  display: flex;
  flex: 1;
  align-items: center;
  gap: 5px;
  min-width: 0;
  height: 25px;
  margin-left: 5px;
  padding-left: 5px;
  background: #fff;
  border: 1px solid #808080;
  border-width: 2px 0 1px 2px;
  border-color: #606060 #fff ${FACE} #606060;
  input { flex: 1; min-width: 0; }
`;

const Panes = styled.div`
  display: flex;
  flex: 1;
  min-height: 0;
`;

const Folders = styled.aside`
  display: flex;
  flex-direction: column;
  width: 222px;
  border-right: 1px solid #808080;
  background: #fff;
`;

const FoldersHead = styled.h2`
  display: flex;
  align-items: center;
  gap: 4px;
  height: 24px;
  margin: 0;
  padding: 0 3px 0 18px;
  border-bottom: 1px solid #808080;
  background: ${FACE};
  font-size: 11px;
  font-weight: normal;
`;

const Tree = styled.ul`
  display: flex;
  flex-direction: column;
  flex: 1;
  min-height: 0;
  padding: 0 0 16px;
`;

const TreeRow = styled.li`
  display: flex;
  flex: 0 1 18px;
  align-items: center;
  min-height: 0;
  padding-left: ${p => p.$child ? 23 : 3}px;
  gap: ${p => p.$child ? 0 : 2}px;
  font-weight: ${p => p.$bold ? 'bold' : 'normal'};
`;

const TreeLabel = styled.span`
  padding: 1px 2px;
  margin-left: 1px;
  white-space: nowrap;
  ${p => p.$on && css`background: ${FACE};`}
`;

const Expander = styled.button`
  flex: none;
  width: 9px;
  height: 9px;
  border: 1px solid #7b7bbd;
  background: linear-gradient(#000, #000) center / 5px 1px no-repeat #fff;
`;

const Branch = styled.span`
  flex: none;
  align-self: stretch;
  width: 8px;
  background:
    repeating-linear-gradient(#888 0 1px, transparent 1px 2px) 0 0 / 1px ${p => p.$end ? '50%' : '100%'} no-repeat,
    repeating-linear-gradient(90deg, #888 0 1px, transparent 1px 2px) 0 50% / ${p => p.$through ? 1 : 7}px 1px no-repeat;
`;

const Reader = styled.div`
  display: flex;
  flex-direction: column;
  flex: 1;
  min-width: 0;
  margin-left: 5px;
  border-left: 1px solid #808080;
`;

const ListPane = styled.div`
  height: 282px;
  padding-right: 1px;
  background: #fff;
`;

const Messages = styled.table`
  width: 100%;
  table-layout: fixed;
`;

const HeadCell = styled.th`
  width: ${p => p.$w ? p.$w + 'px' : 'auto'};
  height: 21px;
  padding-left: ${p => p.$text ? 5 : 2}px;
  background: ${FACE};
  ${raised}
`;

const MessageRow = styled.tr`
  height: 18px;
  &:nth-child(even) { background: #f4f6f9; }
  ${p => p.$on && css`background: #0a246a; color: #fff; outline: 1px dotted #c8c8c8; outline-offset: -1px;`}
  td { white-space: nowrap; overflow: hidden; padding-left: 1px; }
  td:first-child { padding-left: 3px; }
`;

const Dot = styled.i`
  display: block;
  width: 4px;
  height: 4px;
  margin: 0 auto;
  border-radius: 2px;
  background: #999;
`;

const Subject = styled.div`
  display: flex;
  align-items: center;
  height: 18px;
  padding-left: ${p => p.$root ? 1 : 21}px;
  > svg { margin: 0 3px 0 ${p => p.$root ? 4 : 2}px; }
`;

const Slot = styled.span`
  display: flex;
  align-self: stretch;
  width: 16px;
`;

const Envelope = styled.div`
  display: flex;
  height: 92px;
  margin-top: 4px;
  padding: 0 6px;
  border-top: 1px solid #808080;
  border-bottom: 1px solid #404040;
  > button { margin-top: 5px; }
`;

const Fields = styled.dl`
  display: grid;
  grid-template-columns: 62px 1fr;
  grid-auto-rows: 18px;
  column-gap: 8px;
  line-height: 16px;
  dt { text-align: right; font-weight: bold; white-space: nowrap; }
`;

const Body = styled.pre`
  flex: 1;
  min-height: 0;
  padding: 8px;
  overflow: hidden;
  background: #fff;
  font: 13px/16px "Liberation Mono", monospace;
`;

const Signature = styled.span`
  color: #808080;
  a { color: #8080ff; }
`;

const StatusBar = styled.footer`
  display: flex;
  gap: 2px;
  height: 22px;
  padding-top: 2px;
`;

const StatusCell = styled.span`
  display: flex;
  flex: ${p => p.$grow ? '1' : 'none'};
  align-items: center;
  justify-content: center;
  width: ${p => p.$w ? p.$w + 'px' : 'auto'};
  ${sunken}
`;

const Grip = styled.span`
  align-self: end;
  width: 16px;
  height: 16px;
  background: repeating-linear-gradient(135deg, #fff 0 1px, #808080 1px 3px, ${FACE} 3px 4px);
  clip-path: polygon(100% 10%, 100% 100%, 10% 100%);
`;

const EditorMenu = styled.nav`
  display: flex;
  align-items: center;
  height: 20px;
  padding: 1px 0 0 1px;
`;

const EditorFrame = styled.div`
  display: grid;
  grid-template-columns: 1fr 16px;
  grid-template-rows: 1fr 16px;
  flex: 1;
  min-height: 0;
  margin: 0 2px 1px 1px;
  border: 2px solid #606060;
  border-right: 1px solid #fff;
  border-bottom: 1px solid #fff;
`;

const Text = styled.textarea`
  padding: 0 1px;
  overflow: hidden;
  resize: none;
  white-space: pre;
  background: #fff;
  font: 13px/13px "DejaVu Sans Mono", monospace;
`;

const Track = styled.div`
  display: flex;
  flex-direction: ${p => p.$across ? 'row' : 'column'};
  flex: none;
  ${p => p.$across ? 'height' : 'width'}: 16px;
  background: repeating-conic-gradient(#fff 0 25%, ${FACE} 0 50%) 0 0 / 2px 2px;
`;

const TrackButton = styled.button`
  width: 16px;
  height: 16px;
  background: ${FACE};
  ${raised}
`;

const Space = styled.span`
  flex: ${p => p.$grow} 1 0;
`;

const Thumb = styled.span`
  flex: ${p => p.$grow} 1 0;
  background: ${FACE};
  ${raised}
`;

const ExplorerClient = styled.div`
  display: flex;
  flex-direction: column;
  flex: 1;
  min-height: 0;
  padding: 1px 1px 0;
`;

const AddressRow = styled.div`
  display: flex;
  align-items: center;
  gap: 5px;
  height: 34px;
  padding: 0 5px 0 4px;
  ${sunken}
  box-shadow: inset 1px 1px #fff, inset -1px -1px #808080;
`;

const NavButtons = styled.div`
  display: flex;
  gap: 1px;
  width: 66px;
  border-radius: 13px;
  background: linear-gradient(90deg, #b7b4ad, #c9c6bf 50px, ${FACE} 56px);
`;

const Address = styled.div`
  display: flex;
  flex: 1;
  align-items: center;
  height: 21px;
  ${sunken}
  > svg:first-child { margin-right: 5px; }
  > button { margin-left: 9px; }
`;

const Crumb = styled.span`
  display: flex;
  align-items: center;
  gap: 3px;
  margin-left: 3px;
`;

const Search = styled.input`
  width: 210px;
  height: 21px;
  padding-left: 2px;
  border: 2px solid #606060;
  border-right: 1px solid #fff;
  border-bottom: 1px solid #fff;
  background: #fff;
  &::placeholder { color: #808080; opacity: 1; }
`;

const ExplorerMenu = styled.nav`
  display: flex;
  align-items: center;
  height: 24px;
`;

const Commands = styled.div`
  display: flex;
  align-items: center;
  height: 27px;
  padding: 0 10px 4px 9px;
`;

const Command = styled.button`
  justify-content: flex-start;
  gap: 4px;
  width: ${p => p.$w ? p.$w + 'px' : 'auto'};
  padding-right: ${p => p.$w ? 14 : 0}px;
`;

const Columns = styled.div`
  display: flex;
  flex: 1;
  gap: 5px;
  min-height: 0;
`;

const Places = styled.div`
  display: flex;
  flex-direction: column;
  flex: 0 0 52%;
  margin-top: 2px;
  background: #fff;
`;

const PlacesHead = styled.h2`
  display: flex;
  align-items: center;
  height: 23px;
  margin: 0;
  padding: 0 2px 0 11px;
  font-size: 12px;
  font-weight: normal;
`;

const PlacesBody = styled.div`
  display: flex;
  flex: 1;
  min-height: 0;
`;

const PlacesList = styled.ul`
  flex: 1;
  overflow: hidden;
`;

const Place = styled.li`
  display: flex;
  align-items: center;
  height: 18px;
  padding-left: ${p => p.$level ? 30 + p.$level * 20 : 40}px;
  > span { margin-left: 2px; }
`;

const FilePane = styled.div`
  display: flex;
  flex-direction: column;
  flex: 1;
  min-width: 0;
`;

const FileScroll = styled.div`
  flex: 1;
  overflow: hidden;
  background: linear-gradient(90deg, #f7f7f7 160px, #fff 160px);
`;

const Files = styled.table`
  width: 100%;
  table-layout: fixed;
  td { height: 17px; padding-left: 6px; white-space: nowrap; }
  td:first-child { padding-left: 9px; }
`;

const FileHead = styled.th`
  width: ${p => p.$w ? p.$w + 'px' : 'auto'};
  height: 17px;
  padding-left: ${p => p.$slim ? 1 : 5}px;
  background: ${FACE};
  ${raised}
  svg { display: inline-block; }
`;

const FileName = styled.span`
  display: flex;
  align-items: center;
`;

export default App;
